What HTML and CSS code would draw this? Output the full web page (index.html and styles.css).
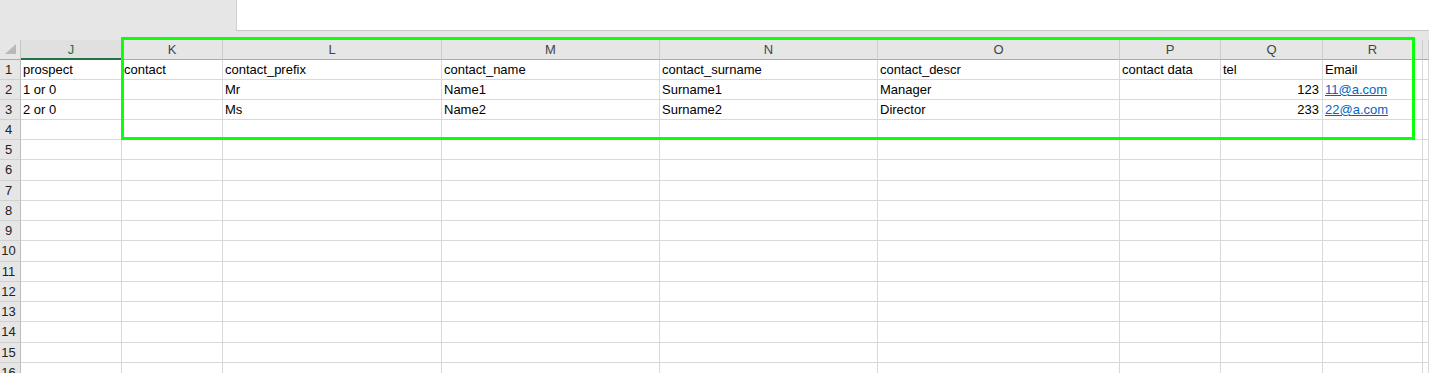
FILE: index.html
```html
<!DOCTYPE html>
<html lang="en">
<head>
  <meta charset="UTF-8">
  <title>Sheet</title>
  <link rel="stylesheet" href="styles.css">
</head>
<body>
  <div class="topbar">
    <div class="namebox"></div>
    <div class="formula"></div>
  </div>

  <div class="sheet">
    <div class="row head">
      <div class="corner"><span class="tri"></span></div>
      <div class="col sel">J</div>
      <div class="col">K</div>
      <div class="col">L</div>
      <div class="col">M</div>
      <div class="col">N</div>
      <div class="col">O</div>
      <div class="col">P</div>
      <div class="col">Q</div>
      <div class="col">R</div>
      <div class="col"></div>
    </div>

    <div class="row">
      <div class="num">1</div>
      <div class="cell">prospect</div>
      <div class="cell">contact</div>
      <div class="cell">contact_prefix</div>
      <div class="cell">contact_name</div>
      <div class="cell">contact_surname</div>
      <div class="cell">contact_descr</div>
      <div class="cell">contact data</div>
      <div class="cell">tel</div>
      <div class="cell">Email</div>
      <div class="cell"></div>
    </div>
    <div class="row">
      <div class="num">2</div>
      <div class="cell">1 or 0</div>
      <div class="cell"></div>
      <div class="cell">Mr</div>
      <div class="cell">Name1</div>
      <div class="cell">Surname1</div>
      <div class="cell">Manager</div>
      <div class="cell"></div>
      <div class="cell right">123</div>
      <div class="cell"><a href="#">11@a.com</a></div>
      <div class="cell"></div>
    </div>
    <div class="row">
      <div class="num">3</div>
      <div class="cell">2 or 0</div>
      <div class="cell"></div>
      <div class="cell">Ms</div>
      <div class="cell">Name2</div>
      <div class="cell">Surname2</div>
      <div class="cell">Director</div>
      <div class="cell"></div>
      <div class="cell right">233</div>
      <div class="cell"><a href="#">22@a.com</a></div>
      <div class="cell"></div>
    </div>

    <div class="row"><div class="num">4</div><div class="cell"></div><div class="cell"></div><div class="cell"></div><div class="cell"></div><div class="cell"></div><div class="cell"></div><div class="cell"></div><div class="cell"></div><div class="cell"></div><div class="cell"></div></div>
    <div class="row"><div class="num">5</div><div class="cell"></div><div class="cell"></div><div class="cell"></div><div class="cell"></div><div class="cell"></div><div class="cell"></div><div class="cell"></div><div class="cell"></div><div class="cell"></div><div class="cell"></div></div>
    <div class="row tall"><div class="num">6</div><div class="cell"></div><div class="cell"></div><div class="cell"></div><div class="cell"></div><div class="cell"></div><div class="cell"></div><div class="cell"></div><div class="cell"></div><div class="cell"></div><div class="cell"></div></div>
    <div class="row"><div class="num">7</div><div class="cell"></div><div class="cell"></div><div class="cell"></div><div class="cell"></div><div class="cell"></div><div class="cell"></div><div class="cell"></div><div class="cell"></div><div class="cell"></div><div class="cell"></div></div>
    <div class="row"><div class="num">8</div><div class="cell"></div><div class="cell"></div><div class="cell"></div><div class="cell"></div><div class="cell"></div><div class="cell"></div><div class="cell"></div><div class="cell"></div><div class="cell"></div><div class="cell"></div></div>
    <div class="row"><div class="num">9</div><div class="cell"></div><div class="cell"></div><div class="cell"></div><div class="cell"></div><div class="cell"></div><div class="cell"></div><div class="cell"></div><div class="cell"></div><div class="cell"></div><div class="cell"></div></div>
    <div class="row tall"><div class="num">10</div><div class="cell"></div><div class="cell"></div><div class="cell"></div><div class="cell"></div><div class="cell"></div><div class="cell"></div><div class="cell"></div><div class="cell"></div><div class="cell"></div><div class="cell"></div></div>
    <div class="row"><div class="num">11</div><div class="cell"></div><div class="cell"></div><div class="cell"></div><div class="cell"></div><div class="cell"></div><div class="cell"></div><div class="cell"></div><div class="cell"></div><div class="cell"></div><div class="cell"></div></div>
    <div class="row"><div class="num">12</div><div class="cell"></div><div class="cell"></div><div class="cell"></div><div class="cell"></div><div class="cell"></div><div class="cell"></div><div class="cell"></div><div class="cell"></div><div class="cell"></div><div class="cell"></div></div>
    <div class="row"><div class="num">13</div><div class="cell"></div><div class="cell"></div><div class="cell"></div><div class="cell"></div><div class="cell"></div><div class="cell"></div><div class="cell"></div><div class="cell"></div><div class="cell"></div><div class="cell"></div></div>
    <div class="row tall"><div class="num">14</div><div class="cell"></div><div class="cell"></div><div class="cell"></div><div class="cell"></div><div class="cell"></div><div class="cell"></div><div class="cell"></div><div class="cell"></div><div class="cell"></div><div class="cell"></div></div>
    <div class="row"><div class="num">15</div><div class="cell"></div><div class="cell"></div><div class="cell"></div><div class="cell"></div><div class="cell"></div><div class="cell"></div><div class="cell"></div><div class="cell"></div><div class="cell"></div><div class="cell"></div></div>
    <div class="row"><div class="num">16</div><div class="cell"></div><div class="cell"></div><div class="cell"></div><div class="cell"></div><div class="cell"></div><div class="cell"></div><div class="cell"></div><div class="cell"></div><div class="cell"></div><div class="cell"></div></div>

    <!-- highlight round K1:R4 -->
    <div class="mark"></div>
  </div>
</body>
</html>
```

FILE: styles.css
```css
html, body {
  margin: 0;
  padding: 0;
}

body {
  background: #e6e6e6;
  font-family: "Liberation Sans", Arial, sans-serif;
  font-size: 13px;
  color: #000;
  overflow: hidden;
  height: 373px;
}

.topbar {
  display: flex;
  height: 31px;
}

.namebox {
  width: 236px;
}

.formula {
  flex: 1;
  background: #fff;
  border-left: 1px solid #d0d0d0;
  border-bottom: 1px solid #c8c8c8;
}

.sheet {
  position: relative;
  margin-top: 9px;
  background: #fff;
}

.row {
  display: grid;
  grid-template-columns: 21px 101px 101px 219px 218px 218px 242px 101px 102px 100px 1fr;
  height: 20px;
}

.row.tall {
  height: 21px;
}

.row > div {
  box-sizing: border-box;
  white-space: nowrap;
  overflow: hidden;
}

.head {
  background: #e6e6e6;
}

.corner {
  display: flex;
  justify-content: flex-end;
  align-items: flex-end;
  padding: 0 4px 5px 0;
  border-right: 1px solid #c4c4c4;
  border-bottom: 1px solid #ababab;
}

.tri {
  width: 11px;
  height: 10px;
  background: #b9b9b9;
  clip-path: polygon(100% 0, 100% 100%, 0 100%);
}

.col {
  text-align: center;
  line-height: 19px;
  color: #444;
  border-right: 1px solid #cdcdcd;
  border-bottom: 1px solid #ababab;
}

.col.sel {
  color: #217346;
  background: #e0e0e0;
  border-bottom: 2px solid #217346;
}

.num {
  text-align: center;
  line-height: 20px;
  color: #222;
  background: #e6e6e6;
  border-right: 1px solid #bdbdbd;
  border-bottom: 1px solid #d0d0d0;
  padding-right: 3px;
}

.cell {
  line-height: 20px;
  padding: 0 3px 0 2px;
  border-right: 1px solid #d9d9d9;
  border-bottom: 1px solid #d9d9d9;
}

.cell.right {
  text-align: right;
}

.cell a {
  color: #0563c1;
}

.mark {
  position: absolute;
  left: 121px;
  top: -3px;
  width: 1294px;
  height: 103px;
  box-sizing: border-box;
  border: 3px solid #0aff0a;
}
```
